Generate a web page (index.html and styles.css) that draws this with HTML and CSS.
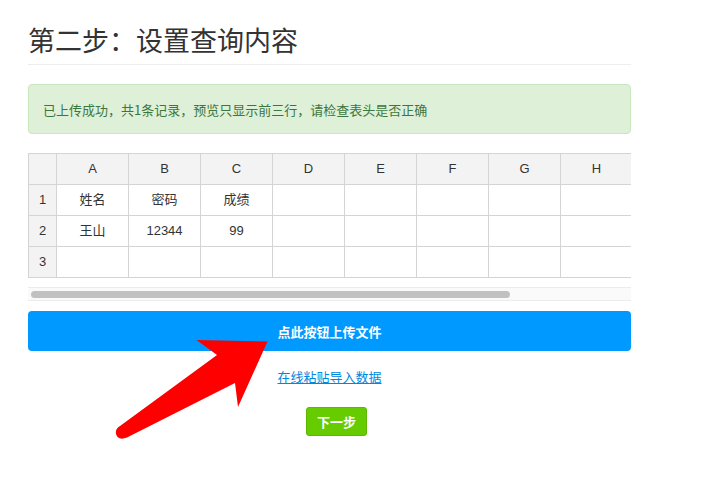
FILE: index.html
```html
<!DOCTYPE html>
<html lang="zh">
<head>
<meta charset="utf-8">
<link rel="stylesheet" href="styles.css">
</head>
<body>
<div class="page">
  <h1 class="title">第二步：设置查询内容</h1>
  <div class="alert">已上传成功，共1条记录，预览只显示前三行，请检查表头是否正确</div>
  <div class="sheet">
    <table class="grid">
      <colgroup>
        <col class="c-idx"><col class="c"><col class="c"><col class="c"><col class="c"><col class="c"><col class="c"><col class="c"><col class="c">
      </colgroup>
      <thead>
        <tr><th></th><th>A</th><th>B</th><th>C</th><th>D</th><th>E</th><th>F</th><th>G</th><th>H</th></tr>
      </thead>
      <tbody>
        <tr><th>1</th><td class="cjk">姓名</td><td class="cjk">密码</td><td class="cjk">成绩</td><td></td><td></td><td></td><td></td><td></td></tr>
        <tr><th>2</th><td class="cjk">王山</td><td>12344</td><td>99</td><td></td><td></td><td></td><td></td><td></td></tr>
        <tr><th>3</th><td></td><td></td><td></td><td></td><td></td><td></td><td></td><td></td></tr>
      </tbody>
    </table>
  </div>
  <div class="scrollbar"><div class="thumb"></div></div>
  <button class="upload">点此按钮上传文件</button>
  <div class="paste"><a href="#">在线粘贴导入数据</a></div>
  <div class="next-row"><button class="next">下一步</button></div>
</div>
<svg class="arrow" width="710" height="493" viewBox="0 0 710 493">
  <path d="M217 355 L196.5 340 L267.5 341.5 L238 407 L235 383 L127 437.5 Q118 441 116 434 Q115 429 120 426 Z" fill="#ff0000"/>
</svg>
</body>
</html>
```
FILE: styles.css
```css
html, body {
  margin: 0;
  padding: 0;
  background: #fff;
}
body {
  font-family: "Liberation Sans", "Noto Sans CJK SC", Arial, sans-serif;
  color: #333;
  font-size: 13px;
  position: relative;
  width: 710px;
  height: 493px;
  overflow: hidden;
}
.page {
  width: 603px;
  margin-left: 28px;
  padding-top: 20px;
}
.title {
  margin: 0;
  font-family: "Noto Sans CJK SC", sans-serif;
  font-weight: 400;
  font-size: 27px;
  line-height: 40px;
  color: #333;
  padding-bottom: 4px;
  border-bottom: 1px solid #eee;
}
.alert {
  margin-top: 19px;
  box-sizing: border-box;
  height: 50px;
  padding: 0 14px;
  display: flex;
  align-items: center;
  background: #dff0d8;
  border: 1px solid #c9e7bd;
  border-radius: 4px;
  color: #3c763d;
  font-family: "Noto Sans CJK SC", sans-serif;
  font-size: 13px;
}
.sheet {
  margin-top: 19px;
  width: 603px;
  overflow: hidden;
}
.grid {
  border-collapse: collapse;
  table-layout: fixed;
  width: 604px;
}
.c-idx { width: 28px; }
.c { width: 72px; }
.grid th, .grid td {
  border: 1px solid #d4d4d4;
  height: 30px;
  padding: 0;
  text-align: center;
  font-weight: 400;
  font-size: 13px;
  line-height: 16px;
  color: #333;
  font-family: "Liberation Sans", "Noto Sans CJK SC", sans-serif;
}
.grid td.cjk {
  font-family: "Noto Sans CJK SC", sans-serif;
  height: 28px;
  padding-bottom: 2px;
}
.grid thead th {
  background: #f3f3f3;
}
.grid tbody th {
  background: #f3f3f3;
}
.scrollbar {
  margin-top: 9px;
  height: 14px;
  box-sizing: border-box;
  border-top: 1px solid #ececec;
  border-bottom: 1px solid #ececec;
  background: #fafafa;
  padding: 3px 0 0 3px;
}
.thumb {
  width: 479px;
  height: 7px;
  border-radius: 4px;
  background: #c1c1c1;
}
.upload {
  display: block;
  width: 100%;
  margin-top: 10px;
  height: 40px;
  border: none;
  border-radius: 4px;
  background: #0099ff;
  color: #fff;
  font-family: "Noto Sans CJK SC", sans-serif;
  font-size: 13px;
  font-weight: 700;
  padding: 0;
}
.paste {
  margin-top: 16px;
  text-align: center;
  line-height: 20px;
}
.paste a {
  color: #0088dd;
  text-decoration: underline;
  font-family: "Noto Sans CJK SC", sans-serif;
  font-size: 13px;
}
.next-row {
  margin-top: 19px;
  display: flex;
  justify-content: center;
  padding-left: 14px;
}
.next {
  width: 61px;
  height: 29px;
  padding: 0;
  border: 1px solid #5cb800;
  border-radius: 3px;
  background: #66cc00;
  color: #fff;
  font-family: "Noto Sans CJK SC", sans-serif;
  font-size: 13px;
  font-weight: 700;
}
.arrow {
  position: absolute;
  left: 0;
  top: 0;
  pointer-events: none;
}
```
